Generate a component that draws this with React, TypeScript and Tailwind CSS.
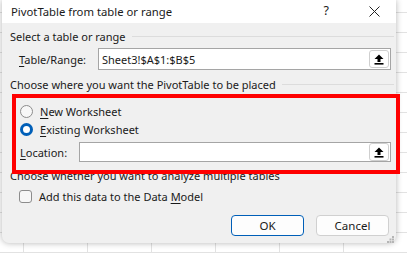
import React from 'react';

function UploadButton() {
  return (
    <div className="flex h-[18px] w-[20px] items-center justify-center rounded-[3px] border border-[#cfcfcf] bg-white">
      <svg width="10" height="11" viewBox="0 0 10 11">
        <path d="M5 0.5 L9.5 5 L6.5 5 L6.5 8 L3.5 8 L3.5 5 L0.5 5 Z" fill="#000" />
        <rect x="0.5" y="9" width="9" height="1.6" fill="#000" />
      </svg>
    </div>
  );
}

function GroupLabel({ children }: { children: React.ReactNode }) {
  return (
    <div className="flex items-center gap-[6px] pr-[2px]">
      <span className="whitespace-nowrap">{children}</span>
      <div className="h-px flex-1 bg-[#dcdcdc]" />
    </div>
  );
}

export default function App() {
  return (
    <div
      className="h-[253px] w-[407px] overflow-hidden bg-white bg-[linear-gradient(#e2e2e2_1px,transparent_1px),linear-gradient(90deg,#e2e2e2_1px,transparent_1px)] bg-[size:64px_20px] bg-[position:23px_12px]"
      style={{ fontFamily: '"Noto Sans", "Open Sans", sans-serif' }}
    >
      <div className="ml-[2px] flex h-[243px] w-[394px] flex-col rounded-b-[7px] bg-[#f0f0f0] text-[11px] leading-none text-[#1a1a1a] shadow-[0_0_6px_rgba(0,0,0,0.3)]">
        {/* title bar */}
        <div className="flex h-[24px] items-center bg-white pl-[9px] text-[11.3px]">
          <span className="flex-1">PivotTable from table or range</span>
          <span className="mr-[40px] text-[12.5px]">?</span>
          <svg width="11" height="11" viewBox="0 0 11 11" className="mr-[16px]">
            <path d="M0.5 0.5 L10.5 10.5 M10.5 0.5 L0.5 10.5" stroke="#222" strokeWidth="1" />
          </svg>
        </div>

        <div className="flex flex-1 flex-col pl-[8px] pt-[8px]">
          <GroupLabel>Select a table or range</GroupLabel>

          <div className="mt-[6px] flex items-center pl-[9px] pr-[5px]">
            <span className="w-[79px]">
              <span className="underline underline-offset-2">T</span>able/Range:
            </span>
            <div className="flex h-[22px] flex-1 items-center border border-[#a5a5a5] bg-white pl-[3px] pr-[1px]">
              <span className="flex-1">Sheet3!$A$1:$B$5</span>
              <UploadButton />
            </div>
          </div>

          <div className="mt-[9px]">
            <GroupLabel>Choose where you want the PivotTable to be placed</GroupLabel>
          </div>

          <div className="relative z-10 ml-[2px] mr-[-4px] mt-[4px] h-[80px] border-[4px] border-[#ff0000]">
            <div className="flex flex-col pl-[4px] pr-[5px] pt-[7px]">
              <div className="flex items-center gap-[7px]">
                <div className="h-[13px] w-[13px] rounded-full border border-[#8c8c8c] bg-[#f7f7f7]" />
                <span>
                  <span className="underline underline-offset-2">N</span>ew Worksheet
                </span>
              </div>
              <div className="mt-[5px] flex items-center gap-[7px]">
                <div className="h-[13px] w-[13px] rounded-full border-[3.5px] border-[#005fb8] bg-white" />
                <span>
                  <span className="underline underline-offset-2">E</span>xisting Worksheet
                </span>
              </div>
              <div className="mt-[6px] flex items-center">
                <span className="w-[59px]">
                  <span className="underline underline-offset-2">L</span>ocation:
                </span>
                <div className="flex h-[20px] flex-1 items-center justify-end border border-[#a5a5a5] bg-white pr-[1px]">
                  <UploadButton />
                </div>
              </div>
            </div>
          </div>

          <div className="-mt-[4px]">Choose whether you want to analyze multiple tables</div>

          <div className="mt-[9px] flex items-center gap-[7px] pl-[9px]">
            <div className="h-[13px] w-[13px] rounded-[3px] border border-[#8c8c8c] bg-[#f7f7f7]" />
            <span>
              Add this data to the Data <span className="underline underline-offset-2">M</span>odel
            </span>
          </div>

          <div className="mt-[12px] flex justify-end gap-[12px] pr-[7px]">
            <button className="h-[21px] w-[73px] rounded-[4px] border border-[#005fb8] bg-[#fdfdfd] text-[11.5px] leading-none">
              OK
            </button>
            <button className="h-[21px] w-[73px] rounded-[4px] border border-[#d0d0d0] bg-[#fdfdfd] text-[11.5px] leading-none">
              Cancel
            </button>
          </div>
          <div className="flex justify-end pr-[2px]">
            <svg width="7" height="7" viewBox="0 0 7 7">
              <rect x="5" y="0" width="2" height="2" fill="#b5b5b5" />
              <rect x="2.5" y="2.5" width="2" height="2" fill="#b5b5b5" />
              <rect x="5" y="2.5" width="2" height="2" fill="#b5b5b5" />
              <rect x="0" y="5" width="2" height="2" fill="#b5b5b5" />
              <rect x="2.5" y="5" width="2" height="2" fill="#b5b5b5" />
              <rect x="5" y="5" width="2" height="2" fill="#b5b5b5" />
            </svg>
          </div>
        </div>
      </div>
    </div>
  );
}
